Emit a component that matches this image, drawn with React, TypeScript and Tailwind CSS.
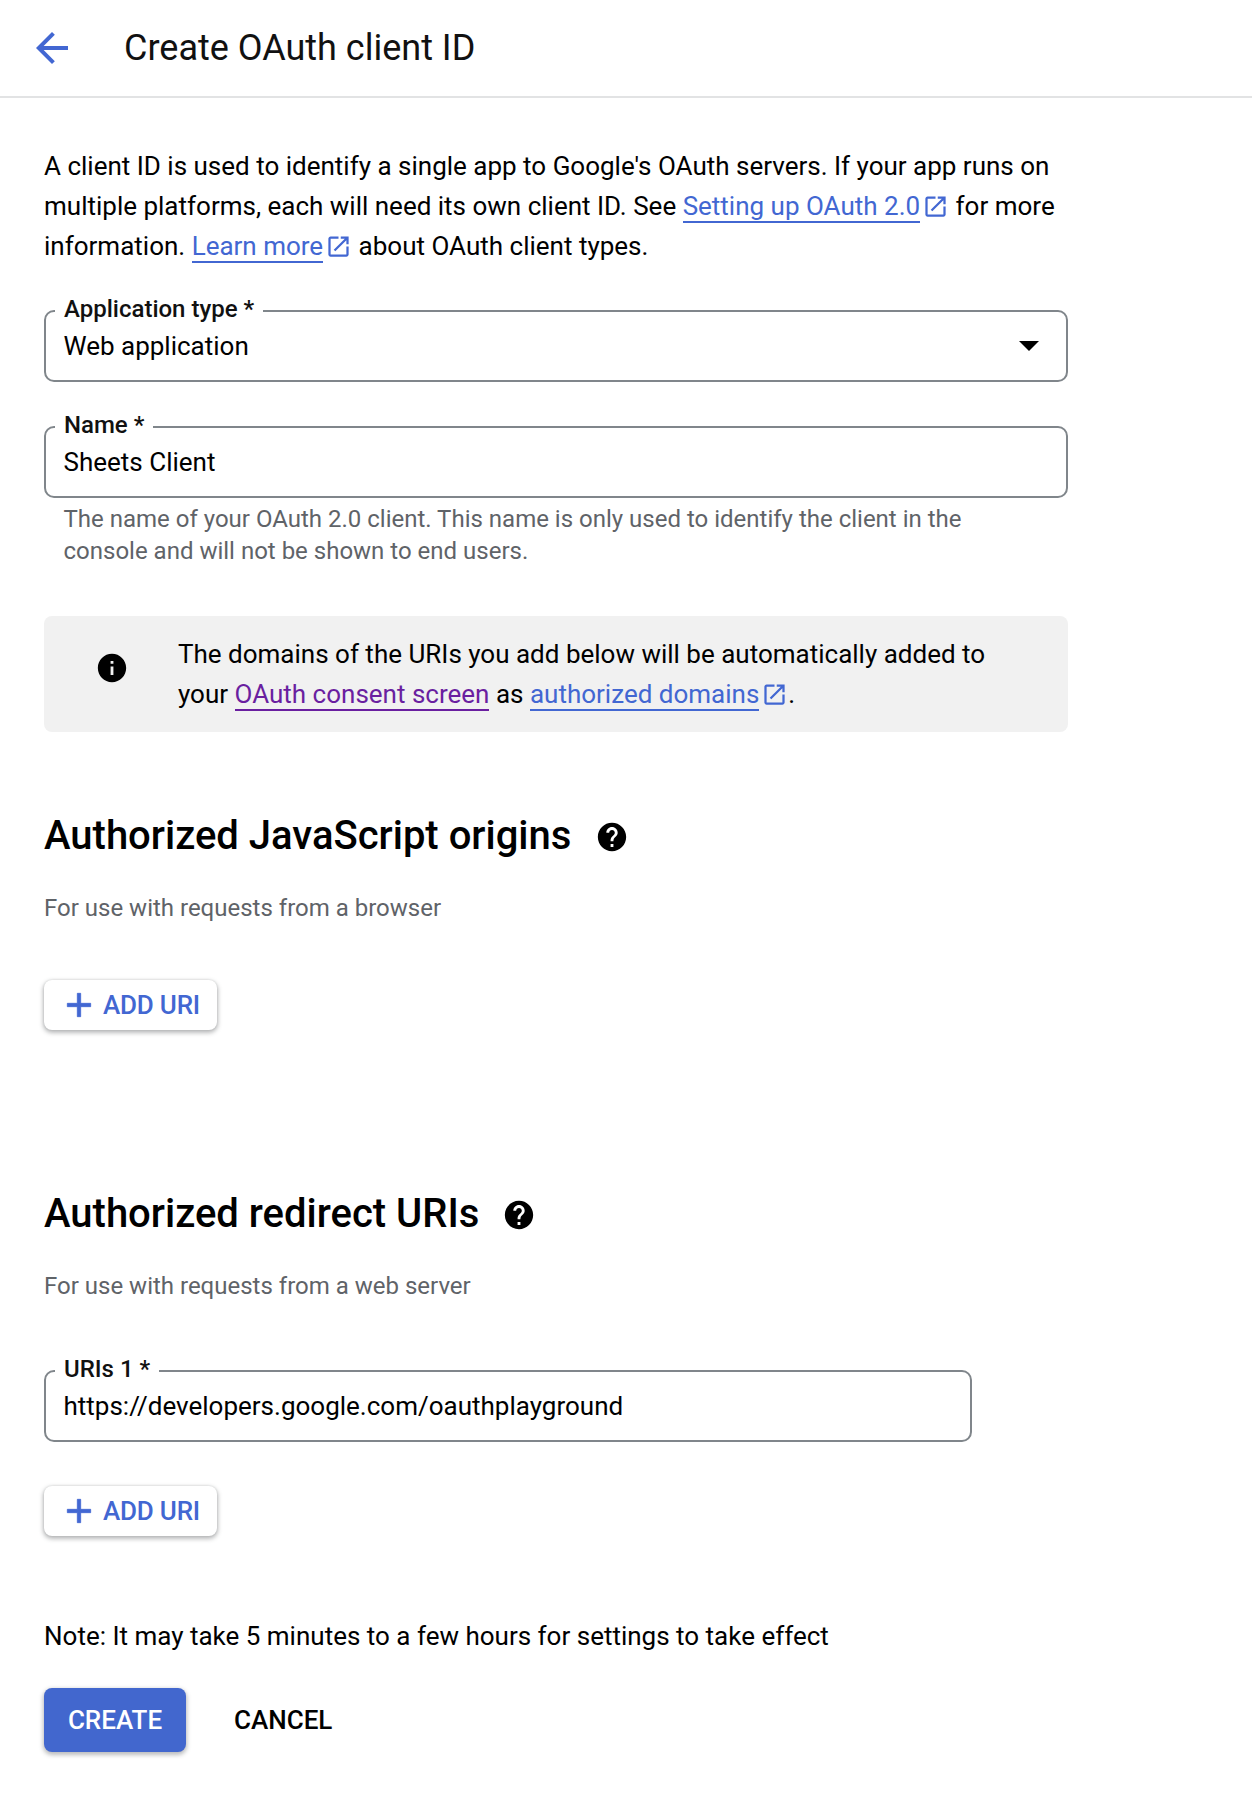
const arrowBack = 'M20 11H7.83l5.59-5.59L12 4l-8 8 8 8 1.41-1.41L7.83 13H20v-2z';
const helpIcon =
  'M12 2C6.48 2 2 6.48 2 12s4.48 10 10 10 10-4.48 10-10S17.52 2 12 2zm1 17h-2v-2h2v2zm2.07-7.75l-.9.92C13.45 12.9 13 13.5 13 15h-2v-.5c0-1.1.45-2.1 1.17-2.83l1.24-1.26c.37-.36.59-.86.59-1.41 0-1.1-.9-2-2-2s-2 .9-2 2H8c0-2.21 1.79-4 4-4s4 1.79 4 4c0 .88-.36 1.68-.93 2.25z';
const infoIcon =
  'M12 2C6.48 2 2 6.48 2 12s4.48 10 10 10 10-4.48 10-10S17.52 2 12 2zm1 15h-2v-6h2v6zm0-8h-2V7h2v2z';
const openInNew =
  'M19 19H5V5h7V3H5c-1.11 0-2 .9-2 2v14c0 1.1.89 2 2 2h14c1.1 0 2-.9 2-2v-7h-2v7zM14 3v2h3.59l-9.83 9.83 1.41 1.41L19 6.41V10h2V3h-7z';
const addIcon = 'M19 13h-6v6h-2v-6H5v-2h6V5h2v6h6v2z';

function Icon({ d, className }: { d: string; className: string }) {
  return (
    <svg viewBox="0 0 24 24" fill="currentColor" className={className}>
      <path d={d} />
    </svg>
  );
}

function ExternalLink({ children }: { children: string }) {
  return (
    <>
      <a className="text-[#4267d2] border-b-2 border-[#4267d2]">{children}</a>
      <Icon
        d={openInNew}
        className="inline-block w-[27px] h-[27px] ml-[2px] align-[-5px] text-[#4267d2]"
      />
    </>
  );
}

function OutlinedField({
  label,
  value,
  className,
  children,
}: {
  label: string;
  value: string;
  className: string;
  children?: React.ReactNode;
}) {
  return (
    <div
      className={`relative h-[72px] rounded-[10px] border-2 border-[#80868b] flex items-center justify-between pl-[17.5px] pr-[27px] ${className}`}
    >
      <span className="absolute left-[9px] -top-[18px] bg-white px-[9px] text-[24px] leading-[30px] font-medium text-[#111111]">
        {label}
      </span>
      <span className="text-black">{value}</span>
      {children}
    </div>
  );
}

function AddUriButton() {
  return (
    <button className="flex items-center w-[173px] h-[50px] rounded-[8px] bg-white shadow-[0_2px_4px_1px_rgba(60,64,67,0.35),0_0_2px_rgba(60,64,67,0.15)] text-[#4267d2] font-medium text-[26px]">
      <Icon d={addIcon} className="w-[40px] h-[40px] ml-[15px] stroke-current stroke-[0.5px]" />
      <span className="ml-[4px] tracking-[-0.2px]">ADD URI</span>
    </button>
  );
}

export default function App() {
  return (
    <div className="min-h-[1800px] bg-white text-black font-['Roboto',sans-serif] text-[26px] leading-[40px]">
      <header className="h-[98px] flex items-center border-b-2 border-[#e2e3e4]">
        <Icon d={arrowBack} className="w-[48px] h-[48px] ml-[28px] text-[#4267d2]" />
        <h1 className="ml-[48px] text-[36px] text-[#111111]">Create OAuth client ID</h1>
      </header>

      <main className="pl-[44px] pt-[48px]">
        <p className="w-[1023px]">
          A client ID is used to identify a single app to Google's OAuth servers. If your app runs on
          multiple platforms, each will need its own client ID. See{' '}
          <ExternalLink>Setting up OAuth 2.0</ExternalLink> for more information.{' '}
          <ExternalLink>Learn more</ExternalLink> about OAuth client types.
        </p>

        <OutlinedField label="Application type *" value="Web application" className="w-[1024px] mt-[44px]">
          <span className="w-0 h-0 border-x-[10px] border-x-transparent border-t-[10px] border-t-black" />
        </OutlinedField>

        <OutlinedField label="Name *" value="Sheets Client" className="w-[1024px] mt-[44px]" />
        <p className="pl-[19.5px] mt-[5px] w-[1024px] pr-[60px] text-[24px] leading-[32px] text-[#5f6368]">
          The name of your OAuth 2.0 client. This name is only used to identify the client in the
          console and will not be shown to end users.
        </p>

        <div className="mt-[49px] w-[1024px] h-[116px] rounded-[8px] bg-[#f1f1f1] flex items-center">
          <Icon d={infoIcon} className="w-[34px] h-[34px] ml-[51px] mr-[49px] mb-[13px] shrink-0" />
          <p className="w-[825px]">
            The domains of the URIs you add below will be automatically added to your{' '}
            <a className="text-[#6a1fa0] border-b-2 border-[#6a1fa0]">OAuth consent screen</a> as{' '}
            <ExternalLink>authorized domains</ExternalLink>.
          </p>
        </div>

        <div className="mt-[76px] flex items-center h-[56px]">
          <h2 className="text-[40px] font-medium">Authorized JavaScript origins</h2>
          <Icon d={helpIcon} className="w-[34px] h-[34px] ml-[24px] mt-[1px]" />
        </div>
        <p className="mt-[28px] text-[24px] leading-[32px] text-[#5f6368]">For use with requests from a browser</p>
        <div className="mt-[56px]">
          <AddUriButton />
        </div>

        <div className="mt-[156px] flex items-center h-[56px]">
          <h2 className="text-[40px] font-medium">Authorized redirect URIs</h2>
          <Icon d={helpIcon} className="w-[34px] h-[34px] ml-[23px] mt-[1px]" />
        </div>
        <p className="mt-[28px] text-[24px] leading-[32px] text-[#5f6368]">For use with requests from a web server</p>

        <OutlinedField
          label="URIs 1 *"
          value="https://developers.google.com/oauthplayground"
          className="w-[928px] mt-[68px]"
        />

        <div className="mt-[44px]">
          <AddUriButton />
        </div>

        <p className="mt-[80px]">Note: It may take 5 minutes to a few hours for settings to take effect</p>

        <div className="mt-[32px] flex items-center font-medium">
          <button className="w-[142px] h-[64px] rounded-[8px] bg-[#4267ce] text-white text-[26px] shadow-[0_2px_4px_1px_rgba(60,64,67,0.35)]">
            CREATE
          </button>
          <button className="ml-[48px] text-[26px]">CANCEL</button>
        </div>
      </main>
    </div>
  );
}
